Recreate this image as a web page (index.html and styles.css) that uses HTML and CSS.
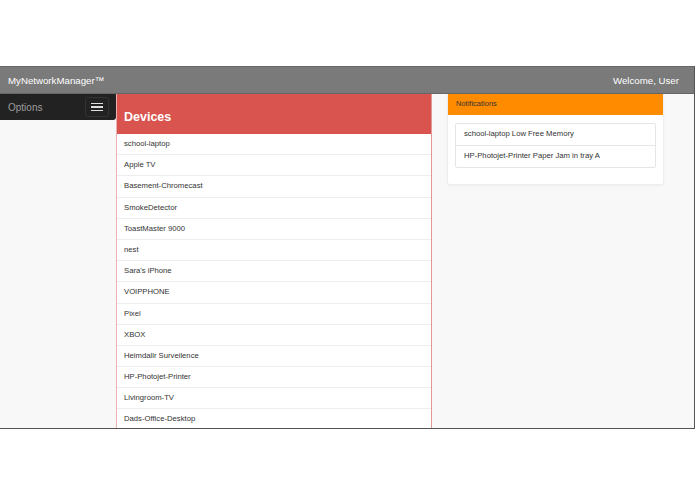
FILE: index.html
```html
<!DOCTYPE html>
<html lang="en">
<head>
    <meta charset="UTF-8">
    <meta name="viewport" content="width=device-width, initial-scale=1.0">
    <title>MyNetworkManager</title>
    <link rel="stylesheet" href="styles.css">
</head>
<body>
    <div class="window">
        <div class="navbar">
            <span class="brand">MyNetworkManager™</span>
            <span class="welcome">Welcome, User</span>
        </div>

        <div class="main">
            <div class="sidebar">
                <div class="options">
                    <span>Options</span>
                    <button class="toggle"><span></span><span></span><span></span></button>
                </div>
            </div>

            <div class="devices">
                <div class="devices-head">Devices</div>
                <ul class="device-list">
                    <li>school-laptop</li>
                    <li>Apple TV</li>
                    <li>Basement-Chromecast</li>
                    <li>SmokeDetector</li>
                    <li>ToastMaster 9000</li>
                    <li>nest</li>
                    <li>Sara's iPhone</li>
                    <li>VOIPPHONE</li>
                    <li>Pixel</li>
                    <li>XBOX</li>
                    <li>Heimdallr Surveilence</li>
                    <li>HP-Photojet-Printer</li>
                    <li>Livingroom-TV</li>
                    <li>Dads-Office-Desktop</li>
                </ul>
            </div>

            <div class="side-area">
                <div class="notifications">
                    <div class="notifications-head">Notifications</div>
                    <div class="notifications-body">
                        <ul class="note-list">
                            <li>school-laptop Low Free Memory</li>
                            <li>HP-Photojet-Printer Paper Jam in tray A</li>
                        </ul>
                    </div>
                </div>
            </div>
        </div>
    </div>
</body>
</html>
```
FILE: styles.css
```css
body {
    margin: 0;
    background-color: #fff;
    font-family: "Liberation Sans", Arial, sans-serif;
    color: #333;
}
.window {
    margin-top: 66px;
    height: 361px;
    border-top: 1px solid #666;
    border-right: 1px solid #555;
    border-bottom: 1px solid #555;
    overflow: hidden;
    background-color: #f8f8f8;
}
.navbar {
    height: 26px;
    background-color: #7a7a7a;
    border-bottom: 1px solid #666;
    display: flex;
    align-items: center;
    justify-content: space-between;
    padding: 0 15px 0 8px;
    color: #fff;
    font-size: 9.7px;
}
.main {
    display: flex;
    height: 334px;
}
.sidebar {
    width: 116px;
    flex-shrink: 0;
}
.options {
    height: 26px;
    background-color: #222;
    border-radius: 0 0 3px 0;
    display: flex;
    align-items: center;
    justify-content: space-between;
    padding: 0 7px 0 8px;
    color: #9d9d9d;
    font-size: 10px;
}
.toggle {
    width: 24px;
    height: 20px;
    padding: 0;
    background-color: #222;
    border: 1px solid #333;
    border-radius: 3px;
    display: flex;
    flex-direction: column;
    align-items: center;
    justify-content: center;
    gap: 2px;
}
.toggle span {
    display: block;
    width: 12px;
    height: 1.5px;
    background-color: #ddd;
}
.devices {
    width: 316px;
    flex-shrink: 0;
    background-color: #fff;
    border-left: 1px solid #e9b2b0;
    border-right: 1px solid #e29995;
    box-sizing: border-box;
}
.devices-head {
    height: 40px;
    background-color: #d9534f;
    color: #fff;
    font-size: 12.5px;
    font-weight: bold;
    padding: 16px 0 0 7px;
    box-sizing: border-box;
}
.device-list {
    list-style: none;
    margin: 0;
    padding: 0;
}
.device-list li {
    height: 21.2px;
    line-height: 19px;
    padding-left: 7px;
    font-size: 7.7px;
    color: #333;
    border-bottom: 1px solid #eee;
    box-sizing: border-box;
}
.side-area {
    flex: 1;
    padding-left: 15px;
}
.notifications {
    width: 215px;
    background-color: #fff;
    border: 1px solid #eee;
    border-top: none;
    border-radius: 0 0 3px 3px;
    box-shadow: 0 1px 2px rgba(0, 0, 0, 0.05);
}
.notifications-head {
    height: 21px;
    line-height: 20px;
    background-color: #ff8c00;
    padding-left: 8px;
    font-size: 7.5px;
    color: #333;
}
.notifications-body {
    padding: 8px 7px 16px 7px;
}
.note-list {
    list-style: none;
    margin: 0;
    padding: 0;
    border: 1px solid #e6e6e6;
    border-radius: 2px;
}
.note-list li {
    height: 21px;
    line-height: 20px;
    padding-left: 8px;
    font-size: 7.7px;
    color: #333;
}
.note-list li + li {
    border-top: 1px solid #e6e6e6;
}
```
